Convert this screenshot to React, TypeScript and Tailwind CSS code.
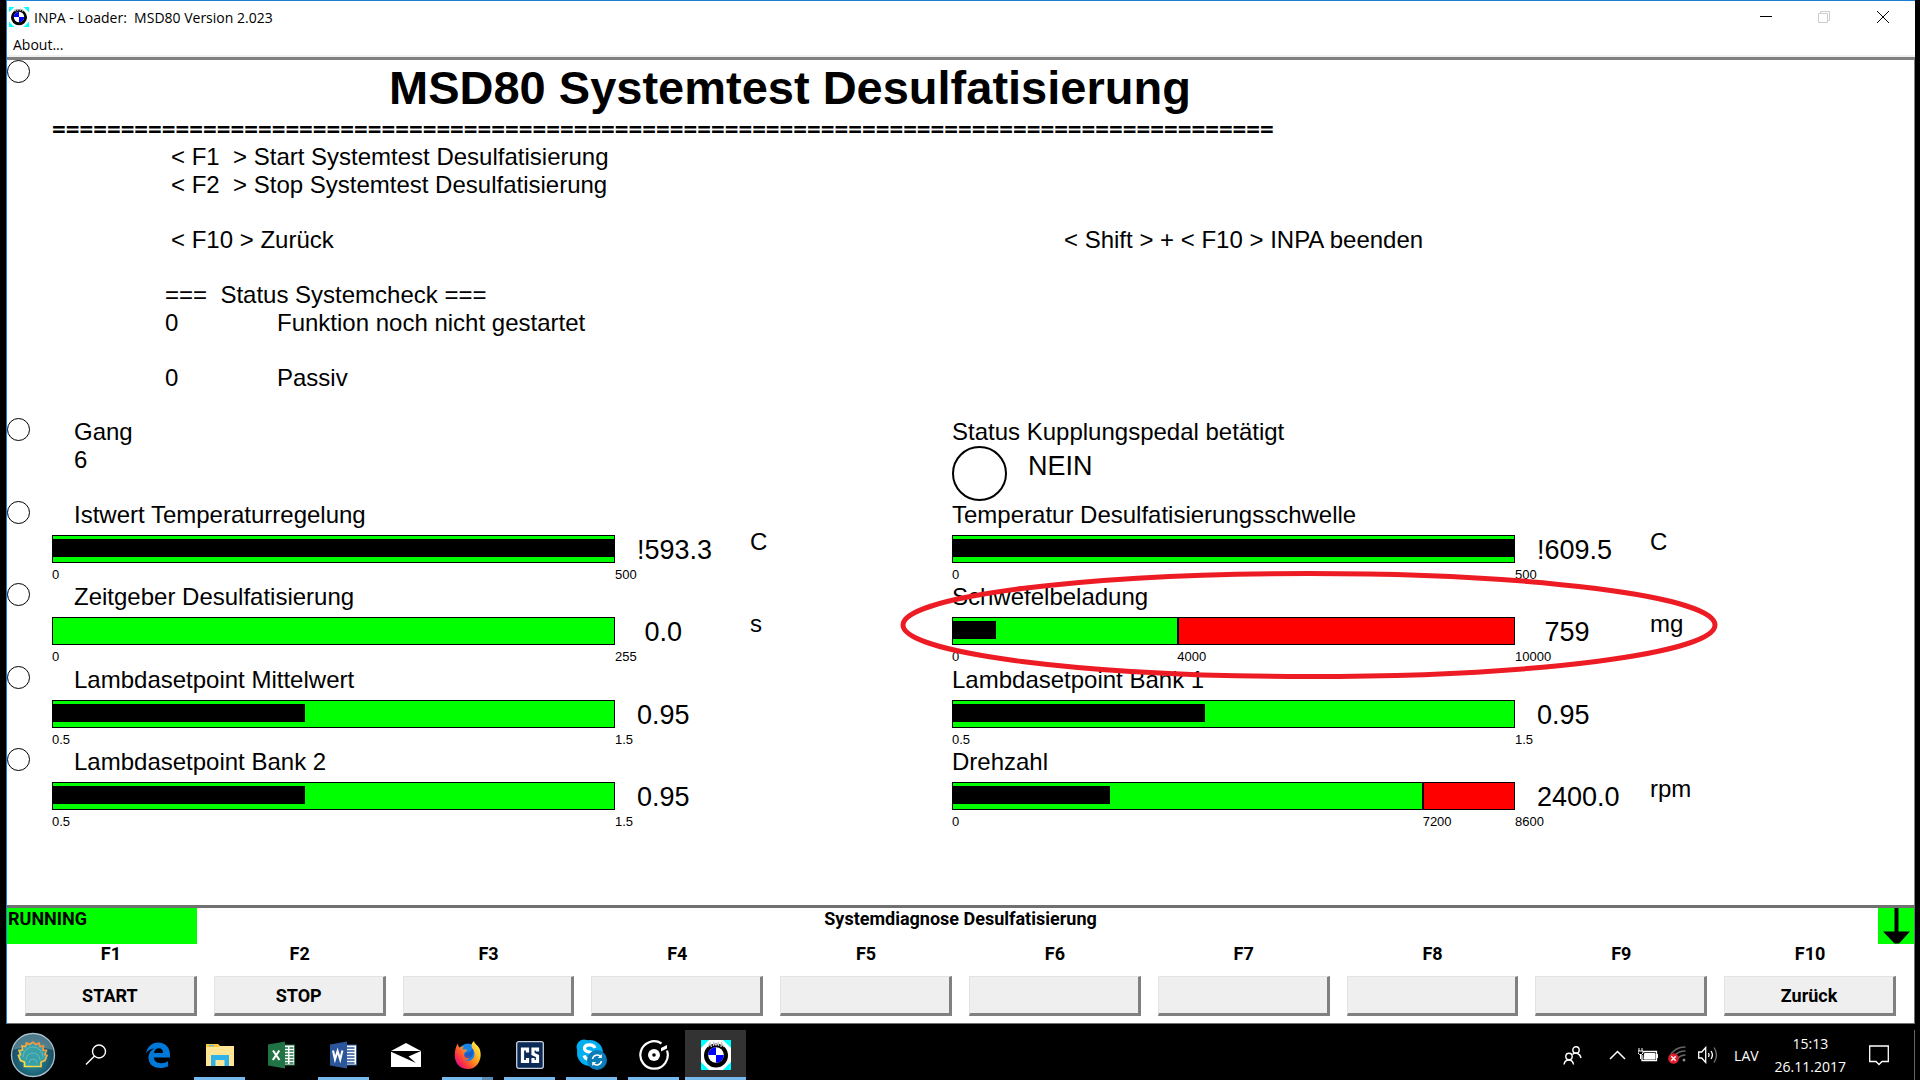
import React from "react";

type GaugeData = {
  label: string;
  min: string;
  max: string;
  fill: number;
  value: string;
  unit?: string;
  limit?: { at: number; text: string };
  marked?: boolean;
};

const GRID =
  "grid grid-cols-[45px_minmax(0,563fr)_minmax(0,135fr)_minmax(0,202fr)_minmax(0,563fr)_minmax(0,135fr)_minmax(0,264fr)]";

const rows: [GaugeData, GaugeData][] = [
  [
    { label: "Istwert Temperaturregelung", min: "0", max: "500", fill: 100, value: "!593.3", unit: "C" },
    { label: "Temperatur Desulfatisierungsschwelle", min: "0", max: "500", fill: 100, value: "!609.5", unit: "C" },
  ],
  [
    { label: "Zeitgeber Desulfatisierung", min: "0", max: "255", fill: 0, value: " 0.0", unit: "s" },
    {
      label: "Schwefelbeladung",
      min: "0",
      max: "10000",
      fill: 7.6,
      value: " 759",
      unit: "mg",
      limit: { at: 40, text: "4000" },
      marked: true,
    },
  ],
  [
    { label: "Lambdasetpoint Mittelwert", min: "0.5", max: "1.5", fill: 45, value: "0.95" },
    { label: "Lambdasetpoint Bank 1", min: "0.5", max: "1.5", fill: 45, value: "0.95" },
  ],
  [
    { label: "Lambdasetpoint Bank 2", min: "0.5", max: "1.5", fill: 45, value: "0.95" },
    {
      label: "Drehzahl",
      min: "0",
      max: "8600",
      fill: 27.9,
      value: "2400.0",
      unit: "rpm",
      limit: { at: 83.6, text: "7200" },
    },
  ],
];

const keys = ["START", "STOP", "", "", "", "", "", "", "", "Zurück"];

function LineRadio({ label, checked }: { label: string; checked?: boolean }) {
  return (
    <input
      type="radio"
      name="line"
      aria-label={label}
      defaultChecked={checked}
      className="block size-[23px] appearance-none rounded-full border border-black bg-white"
    />
  );
}

function Gauge({ data, indent }: { data: GaugeData; indent?: boolean }) {
  const split = data.limit ? data.limit.at : 100;
  return (
    <>
      <div className="relative">
        <div className={indent ? "pl-[22px] whitespace-nowrap" : "whitespace-nowrap"}>{data.label}</div>
        <div className="mt-1.5 grid h-7 border border-black bg-[#00ff00]">
          <div className="col-start-1 row-start-1 flex">
            <div style={{ width: `${split}%` }} />
            {data.limit && <div className="flex-1 border-l-2 border-black bg-[#ff0000]" />}
          </div>
          <div className="col-start-1 row-start-1 mt-[3px] mb-[5px] bg-black" style={{ width: `${data.fill}%` }} />
        </div>
        <div className="mt-1 flex text-[13px] leading-4 whitespace-nowrap">
          <span style={{ width: `${split}%` }}>{data.min}</span>
          {data.limit && <span className="flex-1">{data.limit.text}</span>}
          <span className="w-0">{data.max}</span>
        </div>
        {data.marked && (
          <svg
            className="pointer-events-none absolute -top-3 -left-[52px] z-10 h-[108px] w-[818px]"
            viewBox="0 0 818 108"
            fill="none"
            stroke="#ed1c24"
            strokeWidth="5"
          >
            <ellipse cx="409" cy="54" rx="406" ry="51.5" />
          </svg>
        )}
      </div>
      <div className="pt-[34px] pl-[22px] text-[27px] leading-[30px] whitespace-pre">{data.value}</div>
      <div className="pt-[27px]">{data.unit}</div>
    </>
  );
}

function Roundel({ className }: { className: string }) {
  return (
    <svg className={className} viewBox="0 0 30 30" aria-hidden="true">
      <rect width="30" height="30" fill="#00ffff" />
      <path d="M8 0h14l8 8v14l-8 8H8l-8-8V8z" fill="#fff" />
      <circle cx="15" cy="15.500" r="12" fill="#000" />
      <path d="M7 7 9 3l1.500 4M12.500 6V2.500L15 5l2.500-2.500V6M20 7l.5-4L23 7" fill="none" stroke="#ccc" strokeWidth="1.300" />
      <circle cx="15" cy="15" r="7.800" fill="#fff" />
      <path d="M15 15V7.200A7.800 7.800 0 0 0 7.200 15zM15 15v7.800a7.800 7.800 0 0 0 7.800-7.800z" fill="#0000ff" />
    </svg>
  );
}

function Shell() {
  return (
    <svg className="size-[46px]" viewBox="0 0 46 46" aria-hidden="true">
      <defs>
        <radialGradient id="orb" cx="50%" cy="62%" r="60%">
          <stop offset="0" stopColor="#2f98a3" />
          <stop offset="0.600" stopColor="#1d5f74" />
          <stop offset="1" stopColor="#17415a" />
        </radialGradient>
        <linearGradient id="rim" x1="0" y1="1" x2="0.600" y2="0">
          <stop offset="0" stopColor="#ffee44" />
          <stop offset="1" stopColor="#f09040" />
        </linearGradient>
      </defs>
      <circle cx="23" cy="23" r="21.500" fill="url(#orb)" stroke="#a9c4cf" strokeWidth="1.300" />
      <path d="M3 18a20.500 20.500 0 0 1 40 0q-20 -7-40 0z" fill="#8fb5bf" opacity="0.450" />
      <path
        d="M14.500 34.500v-4.500l-4-1.500-2-5 2-1-1.500-4 3.500-.5-.5-4 3.500.5 1-3.500 3 1.500L23 10l3 2.500 3-1.500 1 3.500 3.500-.5-.5 4 3.500.5-1.500 4 2 1-2 5-4 1.500v4.500z"
        fill="#3aa0a8"
        stroke="url(#rim)"
        strokeWidth="1.700"
      />
      <path d="M13 25a10 10 0 0 1 20 0M16 28a7 7 0 0 1 14 0M19 31a4 4 0 0 1 8 0" fill="none" stroke="#6fc4c8" strokeWidth="1" opacity="0.700" />
    </svg>
  );
}

function EdgeIcon() {
  return (
    <svg className="size-[26px]" viewBox="0 0 26 26" aria-hidden="true">
      <path
        fill="#0078d7"
        d="M1 11.500C2 5 7 .5 13.300.5 20.500.5 25 5.600 25 12.500v3H8.800c.2 4 3.500 5.700 7.400 5.700 2.600 0 4.900-.8 6.900-2v5c-2.300 1.200-5 1.800-8 1.800-7 0-11.600-4-11.600-10.200 0-4.200 2.200-7.500 5.800-9.200C5.500 7 2.600 8.700 1 11.500zm8-.5h9c0-3-1.500-4.700-4.200-4.700S9.400 8.200 9 11z"
      />
    </svg>
  );
}

function FolderIcon() {
  return (
    <svg className="h-6 w-7" viewBox="0 0 28 24" aria-hidden="true">
      <path d="M0 1h12l2 2h14v20H0z" fill="#ffe594" />
      <path d="M0 1h12l1.500 3H0z" fill="#ffc83d" />
      <path d="M3 2h5v1.300H3z" fill="#5bb6e8" />
      <path d="M5 12h18v11h-4.500v-6h-9v6H5z" fill="#2fb2ea" />
    </svg>
  );
}

function OfficeIcon({ kind }: { kind: "X" | "W" }) {
  const c = kind === "X" ? "#217346" : "#2b579a";
  return (
    <svg className="h-7 w-7" viewBox="0 0 28 28" aria-hidden="true">
      <rect x="14" y="4" width="12.500" height="20" fill="#fff" stroke={c} />
      {kind === "X" ? (
        <path d="M16 7h4M21.500 7h4M16 10h4M21.500 10h4M16 13h4M21.500 13h4M16 16h4M21.500 16h4M16 19h4M21.500 19h4M16 22h4M21.500 22h4" stroke={c} strokeWidth="1.700" />
      ) : (
        <path d="M16 7h8.500M16 10h8.500M16 13h8.500M16 16h8.500M16 19h8.500M16 22h8.500" stroke={c} strokeWidth="1.300" />
      )}
      <path d="M0 3.500 17 .5v27L0 24.500z" fill={c} />
      <path
        d={kind === "X" ? "M5 9.500l6.500 9.500M11.300 9.500 4.800 19" : "M3 9.500l2 9 2.600-8.500 2.600 8.500 2.200-9"}
        fill="none"
        stroke="#fff"
        strokeWidth="2.100"
      />
    </svg>
  );
}

function MailIcon() {
  return (
    <svg className="h-6 w-[30px]" viewBox="0 0 30 24" aria-hidden="true">
      <path d="M0 8 15 0l15 8v16H0z" fill="#fff" />
      <path d="M0 8h30L17.500 13.500 25 20 0 8.800z" fill="#000" />
    </svg>
  );
}

function FirefoxIcon() {
  return (
    <svg className="size-7" viewBox="0 0 28 28" aria-hidden="true">
      <defs>
        <linearGradient id="fox" x1="0.900" y1="0.100" x2="0.100" y2="0.800">
          <stop offset="0" stopColor="#fff04a" />
          <stop offset="0.450" stopColor="#ff9a1c" />
          <stop offset="0.800" stopColor="#ff3b3a" />
          <stop offset="1" stopColor="#e0157b" />
        </linearGradient>
      </defs>
      <circle cx="14" cy="12" r="9.500" fill="#1583e8" />
      <path
        d="M4 2.500c0 2 .5 3 1.500 4C7 5.500 8.500 5.300 10 5.500 8.800 6.500 8.500 7.500 8.800 8.500h4.200c0 2-2.500 2.300-3 4 1.200 3.500 5 2.800 6.500 1.500 0 4-4 5.500-6.500 4.500 5 3.500 11-.5 10.500-6 0-3.500-3-5-3-8C17.500 3 18.500 1 20 0c.5 3 3.500 4 5.200 7C29.500 16 24 28 14 28 5 28 .5 21 .8 14 .9 9 2 4.500 4 2.500z"
        fill="url(#fox)"
      />
      <path d="M12 12q4-1 7-4 1 7-3 9-5 1-6-3z" fill="#1a4fbf" opacity="0.800" />
    </svg>
  );
}

function CsIcon() {
  return (
    <svg className="size-7" viewBox="0 0 28 28" aria-hidden="true">
      <rect x="0.700" y="0.700" width="26.600" height="26.600" rx="2" fill="#0b2a55" stroke="#c9d2de" strokeWidth="1.300" />
      <path d="M11.500 11.500V8H6.500v12.500h5V17M21.500 10.500V8h-4.500v5l4.500 2v5.500H17V17" fill="none" stroke="#fff" strokeWidth="3.200" />
    </svg>
  );
}

function SkypeIcon() {
  return (
    <svg className="h-[31px] w-[31px]" viewBox="0 0 31 31" aria-hidden="true">
      <circle cx="8" cy="8" r="7.500" fill="#00aff0" />
      <circle cx="14" cy="14" r="13" fill="#00aff0" />
      <path d="M19 9c-1-2.500-3-3.200-5.500-3.200-3 0-5 1.300-5 3.600 0 5 10.500 2.500 10.500 7.600" fill="none" stroke="#fff" strokeWidth="3.200" />
      <path d="M8 16.500c1 3 3 3.800 5 3.800" fill="none" stroke="#fff" strokeWidth="3.200" />
      <circle cx="21" cy="21" r="10" fill="#0a7cb8" />
      <path d="M16.500 20a4.800 4.800 0 0 1 8.300-2.300M25.500 22a4.800 4.800 0 0 1-8.300 2.300" fill="none" stroke="#fff" strokeWidth="1.500" />
      <path d="M25.800 15v4h-4zM16.200 27v-4h4z" fill="#fff" />
    </svg>
  );
}

function GrooveIcon() {
  return (
    <svg className="size-[30px]" viewBox="0 0 30 30" aria-hidden="true">
      <path d="M22.500 3.500A13.700 13.700 0 1 0 28 10.500" fill="none" stroke="#fff" strokeWidth="2.200" />
      <circle cx="15" cy="15" r="6" fill="#fff" />
      <circle cx="15" cy="15" r="1.800" fill="#000" />
      <path d="M22 11.500V8l6-3v3.500z" fill="#fff" />
    </svg>
  );
}

function SearchIcon() {
  return (
    <svg className="size-[22px]" viewBox="0 0 22 22" fill="none" stroke="#fff" strokeWidth="1.400" aria-hidden="true">
      <circle cx="14" cy="7.500" r="6.500" />
      <path d="M9.500 12 1 20.500" />
    </svg>
  );
}

const tasks: { name: string; icon: React.ReactNode; state: "idle" | "open" | "stack" | "active" }[] = [
  { name: "Search", icon: <SearchIcon />, state: "idle" },
  { name: "Microsoft Edge", icon: <EdgeIcon />, state: "idle" },
  { name: "File Explorer", icon: <FolderIcon />, state: "open" },
  { name: "Excel", icon: <OfficeIcon kind="X" />, state: "idle" },
  { name: "Word", icon: <OfficeIcon kind="W" />, state: "open" },
  { name: "Mail", icon: <MailIcon />, state: "idle" },
  { name: "Firefox", icon: <FirefoxIcon />, state: "stack" },
  { name: "CS", icon: <CsIcon />, state: "open" },
  { name: "Skype", icon: <SkypeIcon />, state: "open" },
  { name: "Groove", icon: <GrooveIcon />, state: "open" },
  { name: "INPA", icon: <Roundel className="size-[30px]" />, state: "active" },
];

function Taskbar() {
  return (
    <footer className="flex h-14 items-stretch bg-black pt-1.5 font-['Open_Sans',sans-serif] text-[15px] text-white">
      <button aria-label="Start" className="flex w-[65px] items-center justify-center">
        <Shell />
      </button>
      <nav className="flex gap-px">
        {tasks.map((t) => (
          <button
            key={t.name}
            aria-label={t.name}
            className={t.state === "active" ? "flex w-[61px] flex-col bg-[#333]" : "flex w-[61px] flex-col"}
          >
            <span className="flex h-[47px] items-center justify-center self-stretch pt-0.5">{t.icon}</span>
            {t.state === "active" && <span className="h-[3px] self-stretch bg-[#76b9ed]" />}
            {t.state === "open" && <span className="mx-[5px] h-[3px] self-stretch bg-[#76b9ed]" />}
            {t.state === "stack" && (
              <span className="mx-[5px] h-[3px] self-stretch border-r-[11px] border-[#5a8cb5] bg-[#76b9ed]" />
            )}
          </button>
        ))}
      </nav>
      <div className="ml-auto flex items-center">
        <button aria-label="People" className="mr-[27px]">
          <svg className="block size-[19px]" viewBox="0 0 19 19" fill="none" stroke="#fff" strokeWidth="1.400">
            <circle cx="13" cy="4" r="3.200" />
            <circle cx="6" cy="10.500" r="3.200" />
            <path d="M1 18.500c.5-3 2.500-4.500 5-4.500s4 1.500 4.500 4.500M9.500 8.500C11 7 12 6.800 13.500 7.200c2.500.5 4 2.300 4.500 4.800" />
          </svg>
        </button>
        <button aria-label="Show hidden icons" className="mr-3">
          <svg className="block h-[10px] w-[17px]" viewBox="0 0 17 10" fill="none" stroke="#fff" strokeWidth="1.500">
            <path d="M1 9l7.500-7.500L16 9" />
          </svg>
        </button>
        <button aria-label="Battery" className="mr-2.5">
          <svg className="block h-[14px] w-5" viewBox="0 0 20 14" fill="none" stroke="#fff">
            <path d="M5 3.500h13.500v9H4V7M19.500 6v4" strokeWidth="1.300" />
            <path d="M6.500 5.500h10.500v5.500h-11z" fill="#fff" />
            <path d="M1 0v3M4 0v3M0 3h5v2L3.500 6.500h-2L0 5zM2.500 6v5" />
          </svg>
        </button>
        <button aria-label="Network" className="mr-3">
          <svg className="block h-[18px] w-[18px]" viewBox="0 0 18 18" fill="none">
            <path d="M2 10C5 4 11 1 17.500 1M6 10c3-3.500 7-5 11.500-5M10 12c2-2 5-3 7.500-3" stroke="#666" strokeWidth="1.300" />
            <circle cx="16" cy="14" r="1.500" fill="#888" />
            <circle cx="5.500" cy="12.500" r="5.300" fill="#e02030" />
            <path d="M3.300 10.300l4.400 4.400M7.700 10.300l-4.400 4.400" stroke="#fff" strokeWidth="1.300" />
          </svg>
        </button>
        <button aria-label="Volume" className="mr-4">
          <svg className="block h-[18px] w-5" viewBox="0 0 20 18" fill="none" stroke="#fff" strokeWidth="1.300">
            <path d="M.7 6h3l4-4.500v15l-4-4.500h-3z" />
            <path d="M10.500 7q1.200 2 0 4M13 5q2.800 4 0 8" />
            <path d="M16 1.500q5 7.500 0 15" stroke="#777" />
          </svg>
        </button>
        <button className="mr-4 text-[14px]">LAV</button>
        <button className="mr-[23px] flex flex-col items-center text-[14px] leading-[23px]">
          <span>15:13</span>
          <span>26.11.2017</span>
        </button>
        <button aria-label="Notifications" className="mr-[25px]">
          <svg className="block h-[21px] w-5" viewBox="0 0 20 21" fill="none" stroke="#fff" strokeWidth="1.300">
            <path d="M.7 1h18.600v15.500H13l-3 3-3-3H.7z" />
          </svg>
        </button>
        <div className="mr-[5px] w-px self-stretch bg-[#666]" />
      </div>
    </footer>
  );
}

export default function App() {
  return (
    <div className="flex min-h-screen flex-col overflow-hidden bg-black font-['Liberation_Sans',Arial,sans-serif] text-black">
      <div className="mr-[5px] ml-1.5 flex flex-1 flex-col border-t border-l border-[#1a7fd4] bg-white">
        <header className="font-['Open_Sans',sans-serif]">
          <div className="flex h-8 items-center pr-0.5 pl-0.5">
            <Roundel className="size-5" />
            <span className="ml-[5px] text-[14px] whitespace-pre">INPA - Loader:  MSD80 Version 2.023</span>
            <div className="ml-auto flex">
              <button aria-label="Minimize" className="flex h-8 w-[58px] items-center justify-center">
                <svg className="h-3 w-3" viewBox="0 0 12 12" stroke="#000" aria-hidden="true">
                  <path d="M0 5.500h12" />
                </svg>
              </button>
              <button aria-label="Restore" disabled className="flex h-8 w-[58px] items-center justify-center">
                <svg className="h-3 w-3" viewBox="0 0 12 12" fill="none" stroke="#ccc" aria-hidden="true">
                  <path d="M.5 2.500h9v9h-9zM2.500 2.500v-2h9v9h-2" />
                </svg>
              </button>
              <button aria-label="Close" className="flex h-8 w-[60px] items-center justify-center">
                <svg className="h-3 w-3" viewBox="0 0 12 12" stroke="#000" aria-hidden="true">
                  <path d="M0 0l12 12M12 0 0 12" />
                </svg>
              </button>
            </div>
          </div>
          <nav className="flex h-6 items-center border-b-2 border-[#f0f0f0] pt-px pl-1.5">
            <button className="text-[14px] leading-5">About...</button>
          </nav>
        </header>

        <main className="flex-1 border-t-[3px] border-r border-t-[#808080] border-r-[#808080] text-[24px] leading-7">
          <div className="flex items-start pb-0.5">
            <LineRadio label="Zeile 1" checked />
            <h1 className="pt-px pl-[359px] text-[47px] leading-[54px] font-bold whitespace-nowrap">
              MSD80 Systemtest Desulfatisierung
            </h1>
          </div>
          <div className="mb-0.5 pl-[45px] font-['Noto_Sans',sans-serif] leading-6 font-bold whitespace-nowrap" aria-hidden="true">
            {"=".repeat(89)}
          </div>
          <div className={`${GRID} whitespace-pre`}>
            <div className="col-start-2 col-span-3 pl-[119px]">
              <p>{"< F1  > Start Systemtest Desulfatisierung"}</p>
              <p>{"< F2  > Stop Systemtest Desulfatisierung"}</p>
            </div>
            <p className="col-start-2 col-span-3 mt-[27px] pl-[119px]">{"< F10 > Zurück"}</p>
            <p className="col-start-5 col-span-3 mt-[27px] pl-28">{"< Shift > + < F10 > INPA beenden"}</p>
            <dl className="col-start-2 col-span-3 mt-[27px] grid grid-cols-[112px_1fr] pl-[113px]">
              <dt className="col-span-2">{"===  Status Systemcheck ==="}</dt>
              <dt>0</dt>
              <dd>Funktion noch nicht gestartet</dd>
              <dt className="mt-[27px]">0</dt>
              <dd className="mt-[27px]">Passiv</dd>
            </dl>
          </div>

          <section className="mt-[26px] grid min-h-[413px] auto-rows-fr">
            <div className={GRID}>
              <LineRadio label="Zeile 2" />
              <div className="pl-[22px]">
                <p>Gang</p>
                <p>6</p>
              </div>
              <div className="col-start-5 col-span-3">
                <p>Status Kupplungspedal betätigt</p>
                <div className="flex items-start">
                  <span className="-mb-1 size-[55px] rounded-full border-2 border-black" />
                  <span className="pt-1.5 pl-[21px] text-[27px]">NEIN</span>
                </div>
              </div>
            </div>
            {rows.map(([left, right], i) => (
              <div key={left.label} className={GRID}>
                <LineRadio label={`Zeile ${i + 3}`} />
                <Gauge data={left} indent />
                <Gauge data={right} />
              </div>
            ))}
          </section>
        </main>

        <section className="border-t-[3px] border-r border-b border-[#707070] pb-[7px] font-['Roboto',sans-serif] text-[18px] font-bold">
          <div className="grid h-9 grid-cols-[190px_1fr_190px]">
            <div className="bg-[#00ff00] pl-px leading-[22px]">RUNNING</div>
            <div className="text-center leading-[22px]">Systemdiagnose Desulfatisierung</div>
            <svg className="size-9 justify-self-end bg-[#00ff00]" viewBox="0 0 36 36" aria-hidden="true">
              <path d="M16.500 0h4v23.500H32L21 35.500h-4.500L5 23.500h11.500z" />
            </svg>
          </div>
          <div className="grid grid-cols-10 gap-x-[17px] px-[18px]">
            {keys.map((k, i) => (
              <div key={i} className="flex flex-col gap-3">
                <label htmlFor={`key${i + 1}`} className="text-center leading-5">{`F${i + 1}`}</label>
                <button
                  id={`key${i + 1}`}
                  className="h-10 w-full border-t border-r-[3px] border-b-[3px] border-l border-t-[#e3e3e3] border-r-[#808080] border-b-[#808080] border-l-[#e3e3e3] bg-[#efefef]"
                >
                  {k}
                </button>
              </div>
            ))}
          </div>
        </section>
      </div>
      <Taskbar />
    </div>
  );
}
